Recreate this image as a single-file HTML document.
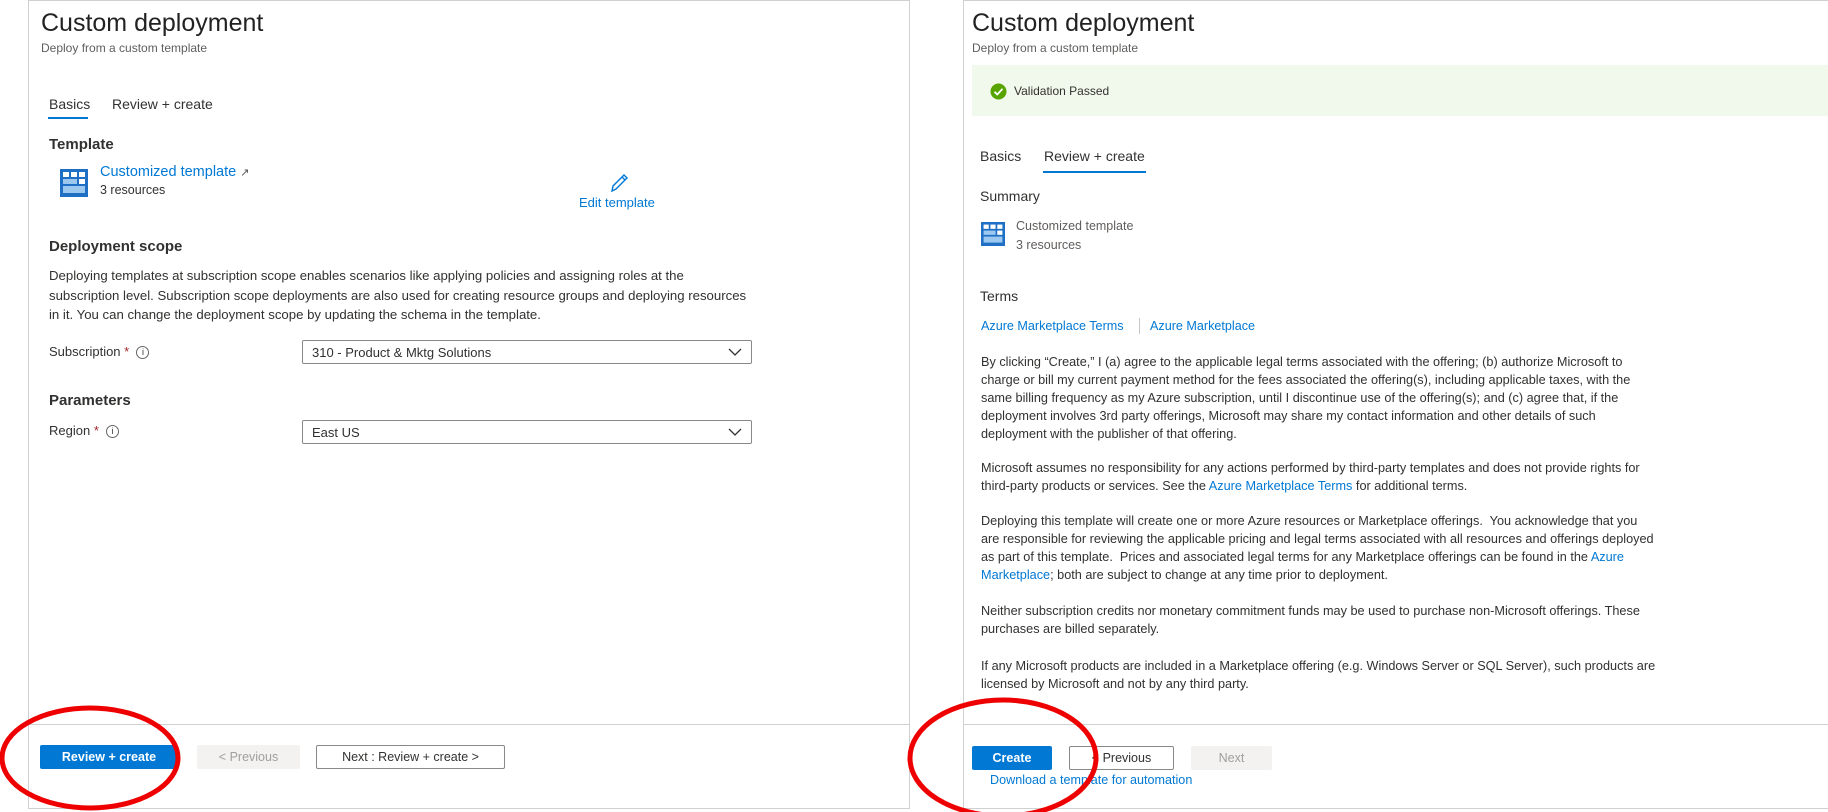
<!DOCTYPE html>
<html><head><meta charset="utf-8"><style>
*{margin:0;padding:0;box-sizing:border-box}
body{width:1828px;height:812px;background:#fff;position:relative;overflow:hidden;font-family:"Liberation Sans",sans-serif;color:#323130}
.a{position:absolute;white-space:nowrap}
.panel{position:absolute;border:1px solid #d0d0d0;background:#fff}
.blue{color:#0078d4}
.h1{font-size:25px;color:#222}
.sub{font-size:12px;color:#605e5c}
.btn{position:absolute;height:24px;font-size:12.5px;display:flex;align-items:center;justify-content:center;border-radius:2px}
.dd{position:absolute;border:1px solid #8a8886;height:24px;font-size:13px;padding-left:9px;display:flex;align-items:center;border-radius:2px}
.p{position:absolute;font-size:13.2px;line-height:17.9px;color:#323130;white-space:nowrap}
.r{font-size:12.7px}
</style></head><body>

<!-- LEFT PANEL -->
<div class="panel" style="left:28px;top:0;width:882px;height:809px"></div>
<div class="a h1" style="left:41px;top:9px">Custom deployment</div>
<div class="a sub" style="left:41px;top:41px">Deploy from a custom template</div>
<div class="a" style="left:49px;top:96px;font-size:14px;color:#323130">Basics</div>
<div class="a" style="left:112px;top:96px;font-size:14px;color:#323130">Review + create</div>
<div class="a" style="left:48px;top:117px;width:40px;height:2px;background:#0078d4"></div>
<div class="a" style="left:49px;top:136px;font-size:15px;font-weight:bold;color:#323130">Template</div>
<svg class="a" style="left:60px;top:169px" width="28" height="28" viewBox="0 0 28 28"><rect x="0" y="0" width="28" height="28" fill="#1f6fc5"/><rect x="3" y="3" width="6" height="5" fill="#fff"/><rect x="11" y="3" width="6" height="5" fill="#fff"/><rect x="19" y="3" width="6" height="5" fill="#fff"/><rect x="3" y="10" width="14" height="5" fill="#9cc8f0"/><rect x="19" y="10" width="6" height="5" fill="#fff"/><rect x="3" y="17" width="22" height="7" fill="#9cc8f0"/></svg>
<div class="a blue" style="left:100px;top:164px;font-size:14.5px">Customized template <span style="font-size:11px;color:#555">&#8599;</span></div>
<div class="a" style="left:100px;top:183px;font-size:12.5px;color:#323130">3 resources</div>
<svg class="a" style="left:608px;top:172px" width="22" height="22" viewBox="0 0 22 22"><path d="M4 19 L5 14 L16 3 L19 6 L8 17 Z M14 5 L17 8" fill="none" stroke="#0078d4" stroke-width="1.4"/></svg>
<div class="a blue" style="left:579px;top:195px;font-size:13px">Edit template</div>
<div class="a" style="left:49px;top:238px;font-size:15px;font-weight:bold;color:#323130">Deployment scope</div>
<div class="p" style="left:49px;top:266px;line-height:19.5px">Deploying templates at subscription scope enables scenarios like applying policies and assigning roles at the<br>subscription level. Subscription scope deployments are also used for creating resource groups and deploying resources<br>in it. You can change the deployment scope by updating the schema in the template.</div>
<div class="a" style="left:49px;top:344px;font-size:13px">Subscription <span style="color:#a4262c">*</span> &nbsp;<span style="display:inline-block;width:13px;height:13px;border:1px solid #666;border-radius:50%;font-size:9px;text-align:center;line-height:11px;vertical-align:middle">i</span></div>
<div class="dd" style="left:302px;top:340px;width:450px">310 - Product &amp; Mktg Solutions</div>
<svg class="a" style="left:727px;top:346px" width="16" height="12"><path d="M2 3 L8 9 L14 3" fill="none" stroke="#333" stroke-width="1.3"/></svg>
<div class="a" style="left:49px;top:392px;font-size:15px;font-weight:bold;color:#323130">Parameters</div>
<div class="a" style="left:49px;top:423px;font-size:13px">Region <span style="color:#a4262c">*</span> &nbsp;<span style="display:inline-block;width:13px;height:13px;border:1px solid #666;border-radius:50%;font-size:9px;text-align:center;line-height:11px;vertical-align:middle">i</span></div>
<div class="dd" style="left:302px;top:420px;width:450px">East US</div>
<svg class="a" style="left:727px;top:426px" width="16" height="12"><path d="M2 3 L8 9 L14 3" fill="none" stroke="#333" stroke-width="1.3"/></svg>
<div class="a" style="left:29px;top:724px;width:880px;height:1px;background:#d0d0d0"></div>
<div class="btn" style="left:40px;top:745px;width:138px;background:#0078d4;color:#fff;font-weight:bold">Review + create</div>
<div class="btn" style="left:197px;top:745px;width:103px;background:#f3f2f1;color:#a19f9d">&lt; Previous</div>
<div class="btn" style="left:316px;top:745px;width:189px;border:1px solid #8a8886;color:#323130">Next : Review + create &gt;</div>

<!-- RIGHT PANEL -->
<div class="panel" style="left:963px;top:0;width:866px;height:809px"></div>
<div class="a h1" style="left:972px;top:9px">Custom deployment</div>
<div class="a sub" style="left:972px;top:41px">Deploy from a custom template</div>
<div class="a" style="left:972px;top:65px;width:856px;height:51px;background:#f1f9ec"></div>
<svg class="a" style="left:990px;top:83px" width="17" height="17"><circle cx="8.5" cy="8.5" r="8" fill="#57a300"/><path d="M4.5 8.8 L7.3 11.5 L12.5 5.8" fill="none" stroke="#fff" stroke-width="1.8"/></svg>
<div class="a" style="left:1014px;top:84px;font-size:12px;color:#323130">Validation Passed</div>
<div class="a" style="left:980px;top:148px;font-size:14px;color:#323130">Basics</div>
<div class="a" style="left:1044px;top:148px;font-size:14px;color:#323130">Review + create</div>
<div class="a" style="left:1043px;top:171px;width:103px;height:2px;background:#0078d4"></div>
<div class="a" style="left:980px;top:188px;font-size:14px;color:#323130">Summary</div>
<svg class="a" style="left:981px;top:222px" width="24" height="24" viewBox="0 0 28 28"><rect x="0" y="0" width="28" height="28" fill="#1f6fc5"/><rect x="3" y="3" width="6" height="5" fill="#fff"/><rect x="11" y="3" width="6" height="5" fill="#fff"/><rect x="19" y="3" width="6" height="5" fill="#fff"/><rect x="3" y="10" width="14" height="5" fill="#9cc8f0"/><rect x="19" y="10" width="6" height="5" fill="#fff"/><rect x="3" y="17" width="22" height="7" fill="#9cc8f0"/></svg>
<div class="a" style="left:1016px;top:219px;font-size:12.5px;color:#605e5c">Customized template</div>
<div class="a" style="left:1016px;top:238px;font-size:12.5px;color:#605e5c">3 resources</div>
<div class="a" style="left:980px;top:288px;font-size:14px;color:#323130">Terms</div>
<div class="a blue" style="left:981px;top:319px;font-size:12.6px">Azure Marketplace Terms</div>
<div class="a" style="left:1139px;top:318px;width:1px;height:16px;background:#c8c6c4"></div>
<div class="a blue" style="left:1150px;top:319px;font-size:12.6px">Azure Marketplace</div>
<div class="p r" style="left:981px;top:354px">By clicking “Create,” I (a) agree to the applicable legal terms associated with the offering; (b) authorize Microsoft to<br>charge or bill my current payment method for the fees associated the offering(s), including applicable taxes, with the<br>same billing frequency as my Azure subscription, until I discontinue use of the offering(s); and (c) agree that, if the<br>deployment involves 3rd party offerings, Microsoft may share my contact information and other details of such<br>deployment with the publisher of that offering.</div>
<div class="p r" style="left:981px;top:460px">Microsoft assumes no responsibility for any actions performed by third-party templates and does not provide rights for<br>third-party products or services. See the <span class="blue">Azure Marketplace Terms</span> for additional terms.</div>
<div class="p r" style="left:981px;top:513px">Deploying this template will create one or more Azure resources or Marketplace offerings.&nbsp; You acknowledge that you<br>are responsible for reviewing the applicable pricing and legal terms associated with all resources and offerings deployed<br>as part of this template.&nbsp; Prices and associated legal terms for any Marketplace offerings can be found in the <span class="blue">Azure</span><br><span class="blue">Marketplace</span>; both are subject to change at any time prior to deployment.</div>
<div class="p r" style="left:981px;top:603px">Neither subscription credits nor monetary commitment funds may be used to purchase non-Microsoft offerings. These<br>purchases are billed separately.</div>
<div class="p r" style="left:981px;top:658px">If any Microsoft products are included in a Marketplace offering (e.g. Windows Server or SQL Server), such products are<br>licensed by Microsoft and not by any third party.</div>
<div class="a" style="left:964px;top:724px;width:864px;height:1px;background:#d0d0d0"></div>
<div class="btn" style="left:972px;top:746px;width:80px;background:#0078d4;color:#fff;font-weight:bold">Create</div>
<div class="btn" style="left:1069px;top:746px;width:105px;border:1px solid #8a8886;color:#323130">&lt; Previous</div>
<div class="btn" style="left:1191px;top:746px;width:81px;background:#f3f2f1;color:#a19f9d">Next</div>
<div class="a blue" style="left:990px;top:773px;font-size:12.6px">Download a template for automation</div>

<!-- red ellipses -->
<svg class="a" style="left:0;top:0" width="1828" height="812"><ellipse cx="90" cy="758" rx="88" ry="50" fill="none" stroke="#e00" stroke-width="5"/><ellipse cx="1003" cy="758" rx="93" ry="58" fill="none" stroke="#e00" stroke-width="5"/></svg>
</body></html>
